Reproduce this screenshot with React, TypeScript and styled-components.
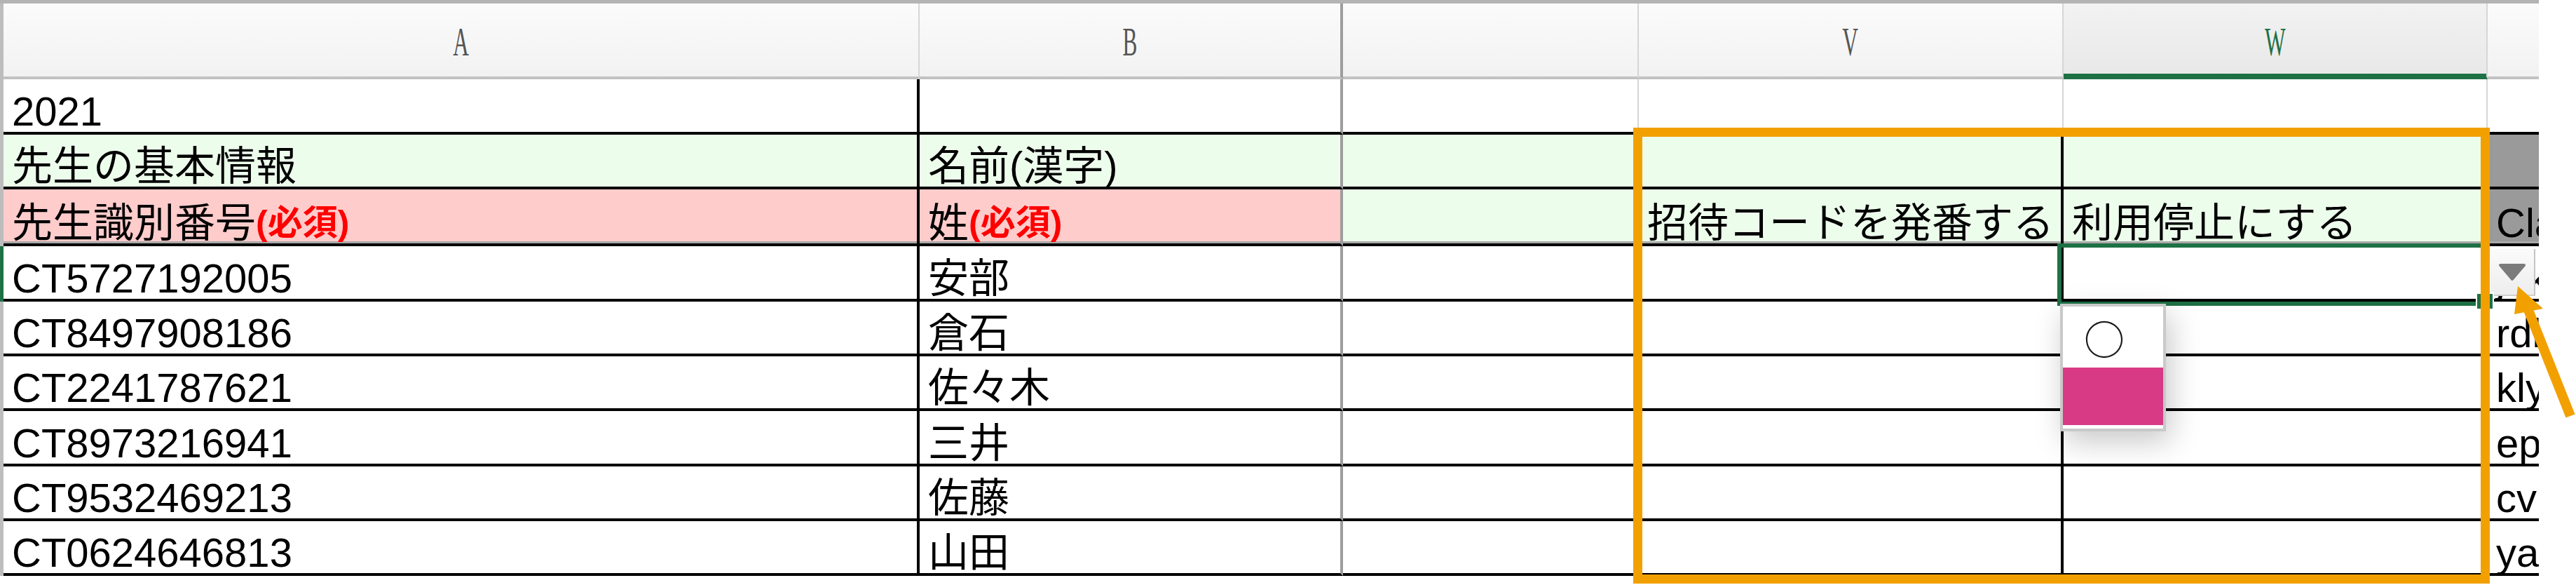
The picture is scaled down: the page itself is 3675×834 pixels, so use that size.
import React from 'react';
import styled, { createGlobalStyle } from 'styled-components';

const GlobalStyle = createGlobalStyle`
  html, body { margin: 0; padding: 0; background: #ffffff; }
  body { font-family: "Liberation Sans", "Noto Sans CJK JP", sans-serif; }
`;

const COLS = '5px 1307px 604px 422px 606px 605px 73px';

const BLACK = '4px solid #000000';
const GREY = '4px solid #9d9d9d';
const LIGHT = '2px solid #d6d6d6';
const GREEN_BG = '#edfdec';
const PINK_BG = '#ffcccc';
const DARK_BG = '#9a9a9a';
const EXCEL_GREEN = '#1e7145';
const ORANGE = '#f2a000';

const Page = styled.div`
  position: relative;
  width: 3675px;
  height: 834px;
  overflow: hidden;
  background: #ffffff;
`;

const Sheet = styled.div`
  width: 3622px;
  display: flex;
  flex-direction: column;
`;

const HeaderRow = styled.div`
  display: grid;
  grid-template-columns: ${COLS};
  height: 113px;
  box-sizing: border-box;
  border-top: 5px solid #b4b4b4;
`;

const HeaderStub = styled.div`
  background: #bdbdbd;
`;

const HeaderCell = styled.div<{ $right?: string; $selected?: boolean }>`
  box-sizing: border-box;
  display: flex;
  align-items: center;
  justify-content: center;
  padding-top: 4px;
  background: ${(p) => (p.$selected ? 'linear-gradient(#f2f2f2, #e8e8e8)' : 'linear-gradient(#fbfbfb, #f2f2f2)')};
  border-right: ${(p) => p.$right ?? 'none'};
  border-bottom: 4px solid ${(p) => (p.$selected ? EXCEL_GREEN : '#c2c2c2')};
  box-shadow: ${(p) => (p.$selected ? `inset 0 -4px 0 ${EXCEL_GREEN}` : 'none')};
`;

const ColLetter = styled.span<{ $selected?: boolean }>`
  display: inline-block;
  font-family: "Liberation Serif", serif;
  font-size: 57px;
  line-height: 57px;
  color: ${(p) => (p.$selected ? EXCEL_GREEN : '#555555')};
  transform: scaleX(0.55);
`;

const Row = styled.div<{ $h: number }>`
  display: grid;
  grid-template-columns: ${COLS};
  height: ${(p) => p.$h}px;
`;

const RowStub = styled.div<{ $active?: boolean }>`
  background: ${(p) => (p.$active ? EXCEL_GREEN : '#bdbdbd')};
`;

const Cell = styled.div<{ $bg?: string; $right?: string; $shade?: boolean }>`
  box-sizing: border-box;
  position: relative;
  display: flex;
  align-items: flex-end;
  padding-left: 12px;
  overflow: hidden;
  white-space: nowrap;
  font-size: 58px;
  line-height: 58px;
  color: #000000;
  background: ${(p) => p.$bg ?? '#ffffff'};
  border-right: ${(p) => p.$right ?? 'none'};
  border-bottom: ${BLACK};
  box-shadow: ${(p) => (p.$shade ? 'inset 0 -3px 0 #a9a9a9' : 'none')};
`;

const Required = styled.span`
  font-weight: 700;
  font-size: 50px;
  color: #ff0000;
`;

const DropButton = styled.div`
  position: absolute;
  left: 4px;
  top: 4px;
  width: 64px;
  height: 67px;
  box-sizing: border-box;
  display: flex;
  align-items: center;
  justify-content: center;
  background: linear-gradient(#fbfbfb, #ededed);
  border-right: 2px solid #c4c4c4;
  border-bottom: 2px solid #cfcfcf;
`;

const Selection = styled.div`
  position: absolute;
  left: 2935px;
  top: 347px;
  width: 615px;
  height: 89px;
  box-sizing: border-box;
  border: 6px solid ${EXCEL_GREEN};
`;

const FillHandle = styled.div`
  position: absolute;
  left: 3532px;
  top: 417px;
  width: 26px;
  height: 25px;
  box-sizing: border-box;
  background: ${EXCEL_GREEN};
  border: 2px solid #ffffff;
`;

const DropList = styled.div`
  position: absolute;
  left: 2939px;
  top: 433px;
  width: 151px;
  box-sizing: border-box;
  border: 4px solid #c9c9c9;
  padding-bottom: 5px;
  background: #ffffff;
  box-shadow: 6px 14px 40px rgba(0, 0, 0, 0.22);
  display: flex;
  flex-direction: column;
`;

const Option = styled.div<{ $active?: boolean }>`
  height: ${(p) => (p.$active ? 82 : 87)}px;
  display: flex;
  align-items: center;
  padding-left: 30px;
  font-family: "Noto Sans CJK JP", sans-serif;
  font-size: 58px;
  line-height: 58px;
  color: #1a1a1a;
  background: ${(p) => (p.$active ? '#d83a86' : '#ffffff')};
`;

const Highlight = styled.div`
  position: absolute;
  left: 2330px;
  top: 182px;
  width: 1222px;
  height: 650px;
  box-sizing: border-box;
  border: 13px solid ${ORANGE};
  pointer-events: none;
`;

const ArrowSvg = styled.svg`
  position: absolute;
  left: 3570px;
  top: 395px;
  width: 105px;
  height: 210px;
  overflow: visible;
`;

type DataRow = { id: string; name: string; extra: string; h: number };

const rows: DataRow[] = [
  { id: 'CT5727192005', name: '安部', extra: 'jdk', h: 79 },
  { id: 'CT8497908186', name: '倉石', extra: 'rdl', h: 78 },
  { id: 'CT2241787621', name: '佐々木', extra: 'kly', h: 78 },
  { id: 'CT8973216941', name: '三井', extra: 'epz', h: 79 },
  { id: 'CT9532469213', name: '佐藤', extra: 'cvn', h: 78 },
  { id: 'CT0624646813', name: '山田', extra: 'yan', h: 78 },
];

const TriangleIcon = () => (
  <svg width="40" height="26" viewBox="0 0 40 26">
    <path d="M3 3 L37 3 L20 23 Z" fill="#7b7b7b" stroke="#7b7b7b" strokeWidth="4" strokeLinejoin="round" />
  </svg>
);

export default function App() {
  return (
    <Page>
      <GlobalStyle />
      <Sheet>
        <HeaderRow>
          <HeaderStub />
          <HeaderCell $right={LIGHT}>
            <ColLetter>A</ColLetter>
          </HeaderCell>
          <HeaderCell $right={GREY}>
            <ColLetter>B</ColLetter>
          </HeaderCell>
          <HeaderCell $right={LIGHT} />
          <HeaderCell $right={LIGHT}>
            <ColLetter>V</ColLetter>
          </HeaderCell>
          <HeaderCell $right={LIGHT} $selected>
            <ColLetter $selected>W</ColLetter>
          </HeaderCell>
          <HeaderCell />
        </HeaderRow>

        <Row $h={79}>
          <RowStub />
          <Cell $right={BLACK}>2021</Cell>
          <Cell $right={GREY} />
          <Cell $right={LIGHT} />
          <Cell $right={LIGHT} />
          <Cell $right={LIGHT} />
          <Cell />
        </Row>

        <Row $h={78}>
          <RowStub />
          <Cell $bg={GREEN_BG} $right={BLACK}>先生の基本情報</Cell>
          <Cell $bg={GREEN_BG} $right={GREY}>名前(漢字)</Cell>
          <Cell $bg={GREEN_BG} $right={BLACK} />
          <Cell $bg={GREEN_BG} $right={BLACK} />
          <Cell $bg={GREEN_BG} $right={BLACK} />
          <Cell $bg={DARK_BG} />
        </Row>

        <Row $h={81}>
          <RowStub />
          <Cell $bg={PINK_BG} $right={BLACK} $shade>
            先生識別番号<Required>(必須)</Required>
          </Cell>
          <Cell $bg={PINK_BG} $right={GREY} $shade>
            姓<Required>(必須)</Required>
          </Cell>
          <Cell $bg={GREEN_BG} $right={BLACK} $shade />
          <Cell $bg={GREEN_BG} $right={BLACK} $shade>招待コードを発番する</Cell>
          <Cell $bg={GREEN_BG} $right={BLACK} $shade>利用停止にする</Cell>
          <Cell $bg={DARK_BG} $shade>Class</Cell>
        </Row>

        {rows.map((r, i) => (
          <Row key={r.id} $h={r.h}>
            <RowStub $active={i === 0} />
            <Cell $right={BLACK}>{r.id}</Cell>
            <Cell $right={GREY}>{r.name}</Cell>
            <Cell $right={BLACK} />
            <Cell $right={BLACK} />
            <Cell $right={BLACK} />
            <Cell>
              {r.extra}
              {i === 0 && (
                <DropButton>
                  <TriangleIcon />
                </DropButton>
              )}
            </Cell>
          </Row>
        ))}
      </Sheet>

      <Selection />
      <FillHandle />
      <DropList>
        <Option>○</Option>
        <Option $active />
      </DropList>
      <Highlight />
      <ArrowSvg viewBox="0 0 105 210">
        <line x1="37" y1="47" x2="97" y2="198" stroke={ORANGE} strokeWidth="14" />
        <polygon points="22,13 17,53 58,45" fill={ORANGE} />
      </ArrowSvg>
    </Page>
  );
}
